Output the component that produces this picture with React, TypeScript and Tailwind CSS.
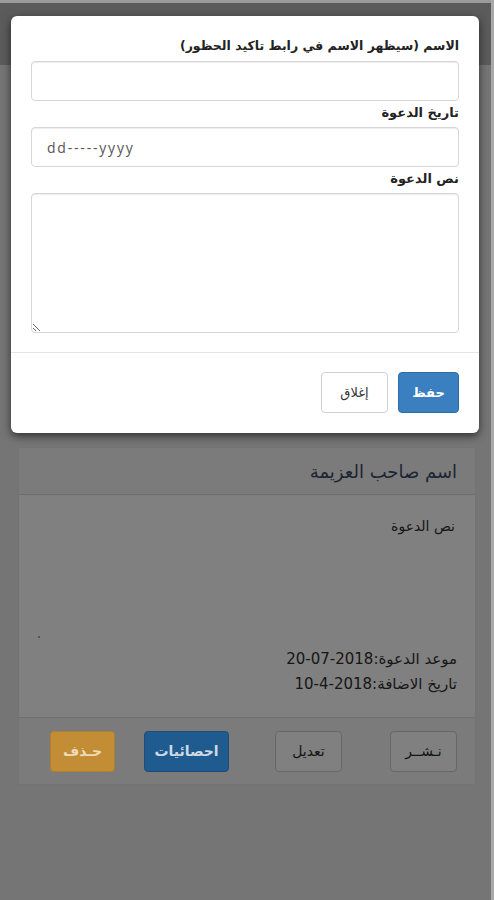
import React from "react";

const font = { fontFamily: '"DejaVu Sans", "Noto Sans", sans-serif' };

export default function App() {
  return (
    <div dir="rtl" style={font} className="relative min-h-[900px] w-[494px] overflow-hidden bg-[#757575]">
      {/* navbar (dimmed) */}
      <div className="h-[65px] border-t-[3px] border-[#9a9a9a] bg-[#5b5b5b]" />

      {/* page content under backdrop */}
      <div className="px-[18px] pt-[382px]">
        <div className="border border-[#737373] bg-[#808080]">
          <div className="flex h-[47px] items-center border-b border-[#6e6e6e] bg-[#7b7b7b] pr-[18px]">
            <span className="text-[18px] text-[#1b2433]">اسم صاحب العزيمة</span>
          </div>
          <div className="relative h-[222px] pr-[20px] pt-[21px] text-[#161616]">
            <div className="text-[14px] font-medium">نص الدعوة</div>
            <div className="absolute left-[19px] top-[141px] h-[2px] w-[2px] bg-[#555]" />
            <div className="absolute right-[18px] top-[152px] text-[15px] leading-[25px]">
              <div>
                موعد الدعوة:<bdi dir="ltr">20-07-2018</bdi>
              </div>
              <div>
                تاريخ الاضافة:<bdi dir="ltr">10-4-2018</bdi>
              </div>
            </div>
          </div>
          <div className="grid h-[67px] grid-cols-4 items-center border-t border-[#6e6e6e] bg-[#7b7b7b]">
            <div className="flex pr-[18px]">
              <div className="flex h-[41px] w-[67px] items-center justify-center rounded-[4px] border border-[#676767] bg-[#808080] text-[14px] text-[#141414]">نـشــر</div>
            </div>
            <div className="flex pr-[19px]">
              <div className="flex h-[41px] w-[67px] items-center justify-center rounded-[4px] border border-[#676767] bg-[#808080] text-[14px] text-[#141414]">تعديل</div>
            </div>
            <div className="flex pr-[18px]">
              <div className="flex h-[41px] w-[85px] items-center justify-center rounded-[4px] border border-[#1d4d78] bg-[#1f5b8e] text-[14px] font-bold text-[#cfd9e4]">احصائيات</div>
            </div>
            <div className="flex pr-[18px]">
              <div className="flex h-[41px] w-[65px] items-center justify-center rounded-[4px] border border-[#b0802f] bg-[#c38d36] text-[14px] font-bold text-[#ecdcbc]">حـذف</div>
            </div>
          </div>
        </div>
      </div>

      {/* scrollbar strip */}
      <div className="absolute right-0 top-0 h-full w-[3px] bg-[#a9a9a9]" />

      {/* modal */}
      <div className="absolute left-[11px] top-[16px] w-[468px] rounded-[6px] bg-white shadow-[0_3px_9px_rgba(0,0,0,0.6)]">
        <div className="px-[20px] pb-[19px] pt-[20px]">
          <label className="block h-[20px] text-[12.5px] font-bold leading-[20px] text-[#222]">الاسم (سيظهر الاسم في رابط تاكيد الحظور)</label>
          <input className="mt-[5px] block h-[40px] w-full rounded-[4px] border border-[#d6d6d6] bg-white px-3 shadow-[inset_0_1px_1px_rgba(0,0,0,0.075)] outline-none" />
          <label className="mt-[2px] block h-[20px] text-[13px] font-bold leading-[20px] text-[#222]">تاريخ الدعوة</label>
          <div className="mt-[4px] flex h-[40px] w-full items-center rounded-[4px] border border-[#d6d6d6] bg-white pl-[15px] shadow-[inset_0_1px_1px_rgba(0,0,0,0.075)]" dir="ltr">
            <span className="text-[14px] tracking-[1.8px] text-[#555]" style={{ fontFamily: '"Open Sans", "DejaVu Sans", sans-serif' }}>dd-----yyyy</span>
          </div>
          <label className="mt-[2px] block h-[20px] text-[13px] font-bold leading-[20px] text-[#222]">نص الدعوة</label>
          <textarea className="mt-[4px] block h-[140px] w-full resize-y rounded-[4px] border border-[#d6d6d6] bg-white px-3 py-2 shadow-[inset_0_1px_1px_rgba(0,0,0,0.075)] outline-none" />
        </div>
        <div className="flex gap-[10px] border-t border-[#e5e5e5] px-[20px] pb-[20px] pt-[19px]">
          <button className="h-[41px] w-[61px] rounded-[4px] border border-[#2e6da4] bg-[#3a7fc0] text-[13px] font-bold text-white">حفظ</button>
          <button className="h-[41px] w-[67px] rounded-[4px] border border-[#d0d0d0] bg-white text-[13px] text-[#333]">إغلاق</button>
        </div>
      </div>
    </div>
  );
}
